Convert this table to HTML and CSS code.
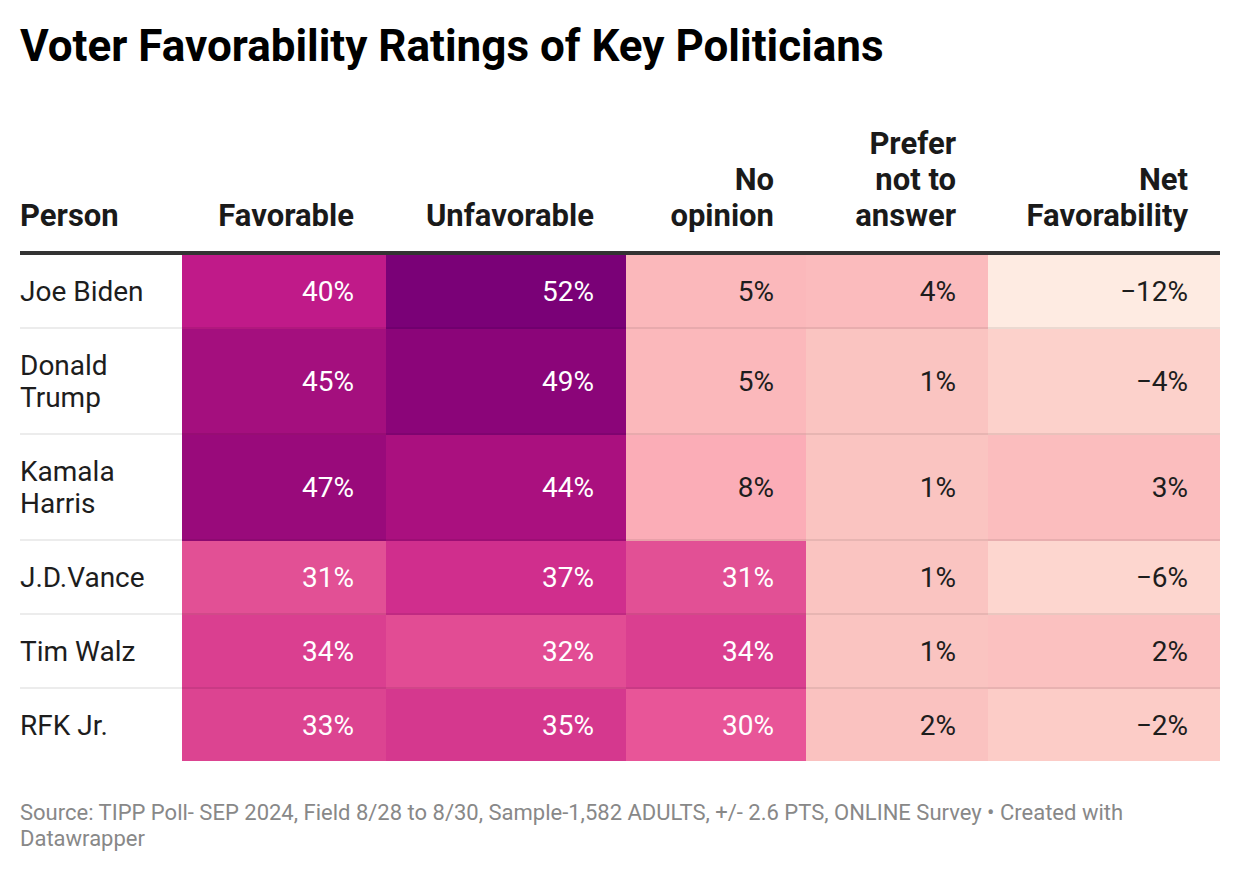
FILE: index.html
```html
<!DOCTYPE html>
<html lang="en">
<head>
<meta charset="utf-8">
<title>Voter Favorability Ratings of Key Politicians</title>
<link rel="stylesheet" href="styles.css">
</head>
<body>
<div class="chart">
  <h1 class="title">Voter Favorability Ratings of Key Politicians</h1>
  <table class="dw-table">
    <colgroup>
      <col class="c-person"><col class="c-fav"><col class="c-unfav"><col class="c-noop"><col class="c-prefer"><col class="c-net">
    </colgroup>
    <thead>
      <tr>
        <th class="left">Person</th>
        <th>Favorable</th>
        <th>Unfavorable</th>
        <th>No<br>opinion</th>
        <th>Prefer<br>not to<br>answer</th>
        <th>Net<br>Favorability</th>
      </tr>
    </thead>
    <tbody>
      <tr>
        <td class="name">Joe Biden</td>
        <td class="num light-text v40">40%</td>
        <td class="num light-text v52">52%</td>
        <td class="num v5">5%</td>
        <td class="num v4">4%</td>
        <td class="num vm12">−12%</td>
      </tr>
      <tr>
        <td class="name">Donald Trump</td>
        <td class="num light-text v45">45%</td>
        <td class="num light-text v49">49%</td>
        <td class="num v5">5%</td>
        <td class="num v1">1%</td>
        <td class="num vm4">−4%</td>
      </tr>
      <tr>
        <td class="name">Kamala Harris</td>
        <td class="num light-text v47">47%</td>
        <td class="num light-text v44">44%</td>
        <td class="num v8">8%</td>
        <td class="num v1">1%</td>
        <td class="num v3">3%</td>
      </tr>
      <tr>
        <td class="name">J.D.Vance</td>
        <td class="num light-text v31">31%</td>
        <td class="num light-text v37">37%</td>
        <td class="num light-text v31">31%</td>
        <td class="num v1">1%</td>
        <td class="num vm6">−6%</td>
      </tr>
      <tr>
        <td class="name">Tim Walz</td>
        <td class="num light-text v34">34%</td>
        <td class="num light-text v32">32%</td>
        <td class="num light-text v34">34%</td>
        <td class="num v1">1%</td>
        <td class="num v2">2%</td>
      </tr>
      <tr>
        <td class="name">RFK Jr.</td>
        <td class="num light-text v33">33%</td>
        <td class="num light-text v35">35%</td>
        <td class="num light-text v30">30%</td>
        <td class="num v2b">2%</td>
        <td class="num vm2">−2%</td>
      </tr>
    </tbody>
  </table>
  <p class="footer">Source: TIPP Poll- SEP 2024, Field 8/28 to 8/30, Sample-1,582 ADULTS, +/- 2.6 PTS, ONLINE Survey • Created with Datawrapper</p>
</div>
</body>
</html>
```

FILE: styles.css
```css
html, body {
  margin: 0;
  padding: 0;
  background: #ffffff;
}

body {
  font-family: Roboto, "Noto Sans", "Liberation Sans", sans-serif;
  color: #1d1d1d;
}

.chart {
  padding: 20px;
  width: 1200px;
}

.title {
  margin: 0 0 53px 0;
  font-size: 44px;
  line-height: 1.2;
  font-weight: 700;
  color: #000000;
}

.dw-table {
  width: 1200px;
  table-layout: fixed;
  border-collapse: separate;
  border-spacing: 0;
}

.c-person { width: 162px; }
.c-fav { width: 204px; }
.c-unfav { width: 240px; }
.c-noop { width: 180px; }
.c-prefer { width: 182px; }
.c-net { width: 232px; }

.dw-table th {
  font-size: 31px;
  line-height: 36px;
  font-weight: 700;
  color: #1a1a1a;
  text-align: right;
  vertical-align: bottom;
  padding: 0 32px 17px 0;
  border-bottom: 4px solid #333333;
}

.dw-table th.left {
  text-align: left;
}

.dw-table td {
  font-size: 28px;
  line-height: 32px;
  font-weight: 400;
  padding: 21px 32px 19px 0;
  border-bottom: 2px solid rgba(0, 0, 0, 0.075);
  vertical-align: middle;
}

.dw-table tbody tr:last-child td {
  border-bottom: none;
}

.dw-table td.name {
  text-align: left;
  padding-right: 0;
  color: #1d1d1d;
}

.dw-table td.num {
  text-align: right;
  color: #1d1d1d;
}

.dw-table td.light-text {
  color: #ffffff;
}

/* colour scale (RdPu) */
.v52 { background: #7a0177; }
.v49 { background: #8b0579; }
.v47 { background: #990a7b; }
.v45 { background: #a40f7e; }
.v44 { background: #aa107f; }
.v40 { background: #c01a89; }
.v37 { background: #d02e8d; }
.v35 { background: #d5388e; }
.v34 { background: #da3f90; }
.v33 { background: #dc4491; }
.v32 { background: #e24c94; }
.v31 { background: #e25095; }
.v30 { background: #e85598; }
.v8 { background: #fbadb7; }
.v5 { background: #fbb8bb; }
.v4 { background: #fbbbbd; }
.v3 { background: #fbbdbe; }
.v2 { background: #fbc1c0; }
.v2b { background: #fac2c0; }
.v1 { background: #fac4c1; }
.vm2 { background: #fcccc7; }
.vm4 { background: #fcd1cb; }
.vm6 { background: #fdd6cf; }
.vm12 { background: #feebe2; }

.footer {
  margin: 39px 0 0 0;
  font-size: 22px;
  line-height: 26px;
  color: #888888;
}
```
